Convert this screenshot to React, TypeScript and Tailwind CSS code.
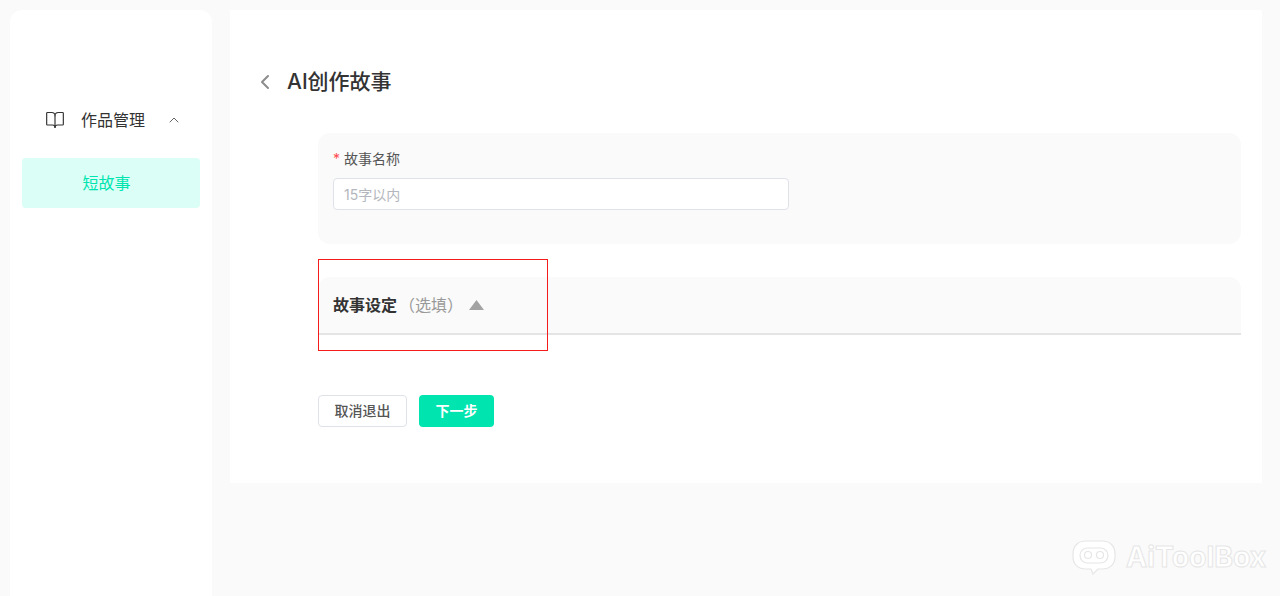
import { BookOpen, ChevronLeft, ChevronUp } from "lucide-react";

const font = { fontFamily: '"Inter", "Noto Sans CJK SC", sans-serif' };

function Sidebar() {
  return (
    <aside className="w-[202px] shrink-0 rounded-t-xl bg-white px-3 pt-[92px]">
      <div className="flex h-[36px] items-center pl-[23px] text-[#333]">
        <BookOpen size={20} strokeWidth={1.4} />
        <span className="ml-[16px] text-base leading-none">作品管理</span>
        <ChevronUp size={16} strokeWidth={1.5} className="ml-[21px] text-[#666]" />
      </div>
      <div className="mt-[20px] flex h-[50px] w-[178px] items-center justify-center rounded bg-[#dbfff6] pr-[9px] text-base text-[#00e5b0]">
        短故事
      </div>
    </aside>
  );
}

function StoryForm() {
  return (
    <div className="ml-[88px] mr-[21px] mt-[35px]">
      <section className="h-[111px] rounded-xl bg-[#fafafa] px-[15px] pt-[16px]">
        <label className="flex h-[20px] items-center text-sm text-[#555]">
          <span className="mr-[4px] text-[#ff4d4f]">*</span>故事名称
        </label>
        <input
          readOnly
          placeholder="15字以内"
          className="mt-[9px] block h-[32px] w-[456px] rounded border border-[#dfe2e8] bg-white px-[10px] text-sm outline-none placeholder:text-[#b4b7bd]"
        />
      </section>

      <section className="mt-[33px] flex h-[58px] items-center rounded-t-xl border-b-2 border-[#e4e4e4] bg-[#fafafa] px-[15px]">
        <span className="text-base font-semibold text-[#333]">故事设定</span>
        <span className="ml-[2px] text-base text-[#999]">（选填）</span>
        <svg width="15" height="10" viewBox="0 0 15 10" className="ml-[6px]">
          <path d="M7.5 0 L15 10 L0 10 Z" fill="#a3a3a3" />
        </svg>
      </section>

      <div className="mt-[60px] flex gap-3">
        <button className="h-[32px] w-[89px] rounded border border-[#dfe2e8] bg-white text-sm font-medium text-[#555]">
          取消退出
        </button>
        <button className="h-[32px] w-[75px] rounded bg-[#00e5b0] text-sm font-semibold text-white">
          下一步
        </button>
      </div>
    </div>
  );
}

export default function App() {
  return (
    <div className="relative flex h-[596px] w-[1280px] gap-[18px] overflow-hidden bg-[#fafafa] pl-[10px] pr-[18px] pt-[10px]" style={font}>
      <Sidebar />
      <main className="h-[473px] flex-1 bg-white">
        <div className="flex items-center pl-[23px] pt-[56px]">
          <ChevronLeft size={24} strokeWidth={2} className="text-[#8c8c8c]" />
          <h1 className="ml-[10px] text-[21px] leading-[32px] font-medium text-[#333]">AI创作故事</h1>
        </div>
        <StoryForm />
      </main>

      {/* annotation drawn over the form */}
      <div className="absolute left-[318px] top-[259px] h-[92px] w-[230px] border border-[#f21c1c]" />

      {/* watermark */}
      <div className="absolute left-[1072px] top-[539px] flex items-center gap-[10px] text-[#e6e6e6]">
        <svg width="44" height="36" viewBox="0 0 44 36" fill="#ffffff" stroke="currentColor" strokeWidth="1.2">
          <path d="M14 2 H30 C38 2 43 7 43 15 V18 C43 25 38 30 30 30 H26 L21 35 L19 30 H14 C6 30 1 25 1 18 V15 C1 7 6 2 14 2 Z" />
          <rect x="8" y="9" width="28" height="15" rx="7.5" />
          <circle cx="16" cy="16" r="3.5" />
          <circle cx="28" cy="16" r="3.5" />
        </svg>
        <span className="text-[28.4px] leading-none font-bold text-white [-webkit-text-stroke:1px_#e6e6e6]">AiToolBox</span>
      </div>
    </div>
  );
}
